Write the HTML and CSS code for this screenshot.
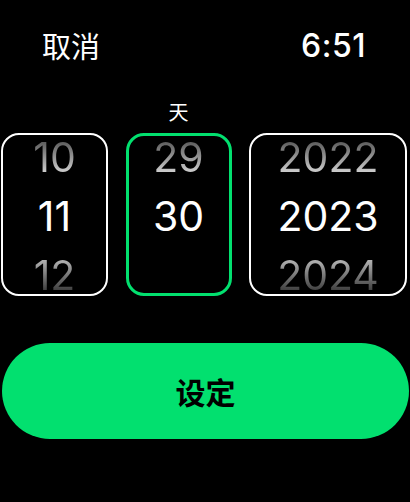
FILE: index.html
```html
<!DOCTYPE html>
<html lang="zh">
<head>
<meta charset="utf-8">
<link rel="stylesheet" href="styles.css">
</head>
<body>
<div class="screen">
  <div class="header">
    <span class="cancel">取消</span>
    <span class="time">6:51</span>
  </div>
  <div class="pickers">
    <div class="label">天</div>
    <div class="box month">
      <div class="num prev">10</div>
      <div class="num cur">11</div>
      <div class="num next">12</div>
    </div>
    <div class="box day active">
      <div class="num prev">29</div>
      <div class="num cur">30</div>
      <div class="num next"></div>
    </div>
    <div class="box year">
      <div class="num prev">2022</div>
      <div class="num cur">2023</div>
      <div class="num next">2024</div>
    </div>
  </div>
  <div class="btn-wrap">
    <button class="set">设定</button>
  </div>
</div>
</body>
</html>
```
FILE: styles.css
```css
html, body {
  margin: 0;
  padding: 0;
  background: #000;
}
body {
  width: 410px;
  height: 502px;
  overflow: hidden;
  font-family: Inter, "Noto Sans CJK SC", sans-serif;
  color: #fff;
}
.screen {
  display: flex;
  flex-direction: column;
}
.header {
  display: flex;
  justify-content: space-between;
  align-items: center;
  padding: 24px 44px 27px 42px;
  height: 42px;
}
.cancel {
  font-family: "Noto Sans CJK SC", sans-serif;
  font-size: 29px;
  font-weight: 400;
}
.time {
  font-size: 32px;
  font-weight: 500;
  letter-spacing: 0.5px;
}
.pickers {
  display: grid;
  grid-template-columns: 107px 106px 158px;
  grid-template-rows: 39px 163px;
  column-gap: 17.5px;
  padding: 0 0 0 1px;
  margin-top: 1px;
}
.label {
  grid-column: 2;
  grid-row: 1;
  font-family: "Noto Sans CJK SC", sans-serif;
  font-size: 20px;
  text-align: center;
  line-height: 36px;
}
.box {
  grid-row: 2;
  box-sizing: border-box;
  border: 2.5px solid #fff;
  border-radius: 18px;
  display: flex;
  flex-direction: column;
  justify-content: center;
  align-items: center;
  padding-top: 3px;
}
.month { grid-column: 1; }
.day { grid-column: 2; }
.year { grid-column: 3; }
.box.active {
  border: 3.5px solid #02e06f;
}
.num {
  flex: none;
  height: 59px;
  line-height: 59px;
  font-size: 41px;
  font-weight: 400;
  text-align: center;
  width: 100%;
}
.num.prev {
  background: linear-gradient(to bottom, #4a4a4a 15%, #d8d8d8 80%);
  -webkit-background-clip: text;
  background-clip: text;
  color: transparent;
}
.num.next {
  background: linear-gradient(to bottom, #b0b0b0 25%, #2a2a2a 85%);
  -webkit-background-clip: text;
  background-clip: text;
  color: transparent;
}
.btn-wrap {
  display: flex;
  padding: 0 1px 0 2px;
  margin-top: 47px;
}
.set {
  flex: 1;
  height: 96px;
  border: none;
  border-radius: 48px;
  background: #02e06f;
  color: #000;
  font-family: "Noto Sans CJK SC", sans-serif;
  font-size: 30px;
  font-weight: 700;
  padding: 0;
}
```
